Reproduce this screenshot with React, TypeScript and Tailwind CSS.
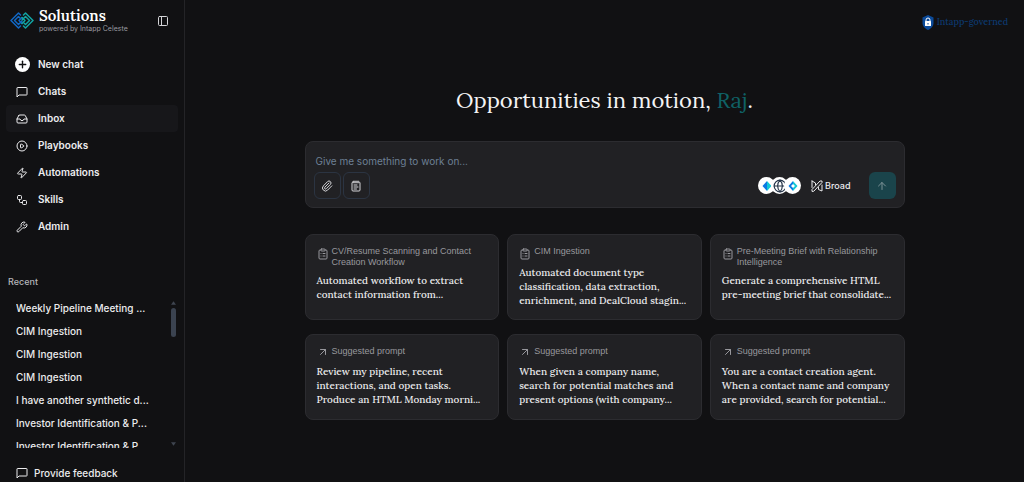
import type { ReactNode } from 'react';
import {
  ArrowUp,
  ArrowUpRight,
  CirclePlay,
  ClipboardList,
  Globe,
  Inbox,
  NotepadText,
  PanelLeft,
  Paperclip,
  Plus,
  Workflow,
  Wrench,
  Zap,
} from 'lucide-react';

const serif = "font-['Lora','Liberation_Serif',serif]";

function Logo() {
  return (
    <svg viewBox="0 0 48 34" className="w-6 h-[17px] shrink-0" fill="none" strokeWidth="3" strokeLinejoin="round" strokeLinecap="round">
      <g stroke="#1268c4">
        <path d="M21 6 17 2 2 17 17 32 21 28" />
        <path d="M20 12 17 9 9 17 17 25 24 18" />
        <path d="M24 11 18 17 24 23" />
      </g>
      <g stroke="#12a5a3">
        <path d="M27 6 31 2 46 17 31 32 27 28" />
        <path d="M24 16 31 9 39 17 31 25 28 22" />
        <path d="M24 11 30 17 24 23" />
      </g>
    </svg>
  );
}

function ChatIcon({ className }: { className?: string }) {
  return (
    <svg viewBox="0 0 24 24" className={className} fill="none" stroke="currentColor" strokeWidth="2" strokeLinejoin="round">
      <path d="M22 4a1 1 0 0 0-1-1H3a1 1 0 0 0-1 1v18l4-4h15a1 1 0 0 0 1-1z" />
    </svg>
  );
}

function BroadIcon() {
  return (
    <svg viewBox="0 0 24 24" className="w-3 h-3" fill="none" stroke="currentColor" strokeWidth="2" strokeLinejoin="round" strokeLinecap="round">
      <path d="M2 2v13M2 2l7 4v4M2 22v-3L18 2h4v3L6 22zM22 10v12l-7-3v-4" />
    </svg>
  );
}

function ShieldIcon() {
  return (
    <svg viewBox="0 0 24 30" className="w-3 h-[15px]">
      <path d="M12 0 23 5v11c0 7-5 11-11 14C6 27 1 23 1 16V5z" fill="#0b4a99" />
      <path d="M8 13v-3a4 4 0 0 1 8 0v3" fill="none" stroke="#fff" strokeWidth="2" />
      <rect x="6" y="12" width="12" height="10" rx="1" fill="#fff" />
      <path d="M12 16v3" stroke="#0b4a99" strokeWidth="2" />
    </svg>
  );
}

function SourceDiamond({ hollow }: { hollow?: boolean }) {
  return (
    <svg viewBox="0 0 20 20" className="w-[10px] h-[10px]">
      <path d="M10 0 1 10 10 20z" fill="#0b78e3" />
      <path d="M10 0 19 10 10 20z" fill="#12c8d6" />
      {hollow && <path d="M10 6 14 10 10 14 6 10z" fill="#fff" />}
    </svg>
  );
}

const navItems = [
  {
    label: 'New chat',
    icon: (
      <span className="flex w-[15px] h-[15px] items-center justify-center rounded-full bg-white text-[#111113]">
        <Plus className="w-[11px] h-[11px]" strokeWidth={3} />
      </span>
    ),
  },
  { label: 'Chats', icon: <ChatIcon className="w-3 h-3" /> },
  { label: 'Inbox', icon: <Inbox className="w-3 h-3" />, active: true },
  { label: 'Playbooks', icon: <CirclePlay className="w-3 h-3" /> },
  { label: 'Automations', icon: <Zap className="w-3 h-3" /> },
  { label: 'Skills', icon: <Workflow className="w-3 h-3" /> },
  { label: 'Admin', icon: <Wrench className="w-3 h-3" /> },
];

const recent = [
  'Weekly Pipeline Meeting ...',
  'CIM Ingestion',
  'CIM Ingestion',
  'CIM Ingestion',
  'I have another synthetic d...',
  'Investor Identification & P...',
  'Investor Identification & P...',
];

const cards = [
  {
    title: 'CV/Resume Scanning and Contact\nCreation Workflow',
    body: 'Automated workflow to extract\ncontact information from...',
  },
  {
    title: 'CIM Ingestion',
    body: 'Automated document type\nclassification, data extraction,\nenrichment, and DealCloud stagin...',
  },
  {
    title: 'Pre-Meeting Brief with Relationship\nIntelligence',
    body: 'Generate a comprehensive HTML\npre-meeting brief that consolidate...',
  },
  {
    title: 'Suggested prompt',
    body: 'Review my pipeline, recent\ninteractions, and open tasks.\nProduce an HTML Monday morni...',
    prompt: true,
  },
  {
    title: 'Suggested prompt',
    body: 'When given a company name,\nsearch for potential matches and\npresent options (with company...',
    prompt: true,
  },
  {
    title: 'Suggested prompt',
    body: 'You are a contact creation agent.\nWhen a contact name and company\nare provided, search for potential...',
    prompt: true,
  },
];

function Sidebar() {
  return (
    <aside className="flex h-screen w-[185px] shrink-0 flex-col border-r border-[#242427]">
      <header className="flex items-center pt-2 pl-[10px] pr-[15px]">
        <Logo />
        <div className="ml-[5px] flex-1">
          <div className={`${serif} text-[15px] leading-4 font-semibold text-white`}>Solutions</div>
          <div className="text-[7px] leading-[9px] text-[#9a9aa0] whitespace-nowrap">powered by Intapp Celeste</div>
        </div>
        <button aria-label="Toggle sidebar" className="text-[#d5d5d8]">
          <PanelLeft className="w-3 h-3" />
        </button>
      </header>

      <nav className="mt-[18px] px-[6px]">
        {navItems.map((item) => (
          <a
            key={item.label}
            href="#"
            className={`flex h-[27px] items-center gap-2 rounded pl-2 text-[10px] font-semibold text-[#ececee] ${item.active ? 'bg-[#17171a]' : ''}`}
          >
            <span className="flex w-4 justify-center">{item.icon}</span>
            {item.label}
          </a>
        ))}
      </nav>

      <h2 className="mt-9 pl-2 text-[9px] leading-3 font-medium text-[#b5b5ba]">Recent</h2>
      <div className="mt-[9px] flex min-h-0 flex-1 pr-[6px]">
        <ul className="min-w-0 flex-1 overflow-hidden pl-4">
          {recent.map((title, i) => (
            <li key={i}>
              <a href="#" className="block h-[23px] truncate text-[10px] leading-[23px] font-medium text-[#ececee]">
                {title}
              </a>
            </li>
          ))}
        </ul>
        <div className="flex w-[10px] flex-col items-center pt-1 text-[#3f4550]">
          <svg viewBox="0 0 6 4" className="w-[5px] h-1" fill="currentColor"><path d="M3 0 6 4H0z" /></svg>
          <div className="mt-[3px] h-[29px] w-[5px] rounded-full bg-[#3b4350]" />
          <svg viewBox="0 0 6 4" className="mt-auto mb-[2px] w-[5px] h-1" fill="currentColor"><path d="M3 4 6 0H0z" /></svg>
        </div>
      </div>
      <a href="#" className="mt-4 flex h-[18px] items-center gap-[6px] pl-4 text-[10px] font-medium text-[#ececee]">
        <ChatIcon className="w-3 h-3" />
        Provide feedback
      </a>
    </aside>
  );
}

function ToolButton({ label, children }: { label: string; children: ReactNode }) {
  return (
    <button aria-label={label} type="button" className="flex w-[27px] h-[27px] items-center justify-center rounded-md border border-[#2b3442] text-[#d5d5d8]">
      {children}
    </button>
  );
}

function Composer() {
  return (
    <form className="rounded-lg border border-[#2c2c30] bg-[#212124] px-2 pt-3 pb-2" onSubmit={(e) => e.preventDefault()}>
      <textarea
        aria-label="Message"
        rows={1}
        placeholder="Give me something to work on..."
        className="block h-[18px] w-full resize-none bg-transparent px-[2px] text-[10px] leading-[14px] text-white outline-none placeholder:text-[#6d8095]"
      />
      <div className="flex items-center gap-[2px]">
        <ToolButton label="Attach file"><Paperclip className="w-3 h-3" /></ToolButton>
        <ToolButton label="Templates"><NotepadText className="w-3 h-3" /></ToolButton>
        <button aria-label="Sources" type="button" className="ml-auto flex">
          <span className="flex w-[17px] h-[17px] items-center justify-center rounded-full bg-white">
            <SourceDiamond />
          </span>
          <span className="-ml-1 flex w-[17px] h-[17px] items-center justify-center rounded-full bg-white text-[#27364a]">
            <Globe className="w-[14px] h-[14px]" />
          </span>
          <span className="-ml-1 flex w-[17px] h-[17px] items-center justify-center rounded-full bg-white">
            <SourceDiamond hollow />
          </span>
        </button>
        <button type="button" className="ml-2 flex items-center gap-[2px] text-[9px] font-medium text-[#ececee]">
          <BroadIcon />
          Broad
        </button>
        <button aria-label="Send" type="submit" className="ml-4 flex w-[27px] h-[27px] items-center justify-center rounded-md bg-[#1a444b] text-[#7b9196]">
          <ArrowUp className="w-3 h-3" />
        </button>
      </div>
    </form>
  );
}

export default function App() {
  return (
    <div className="flex h-screen overflow-hidden bg-[#111113] font-['Inter','Liberation_Sans',sans-serif]">
      <Sidebar />
      <main className="min-w-0 flex-1 px-4">
        <div className={`${serif} flex h-11 items-center justify-end gap-[3px] text-[9px] font-medium text-[#0c3a70]`}>
          <ShieldIcon />
          Intapp-governed
        </div>
        <div className="mx-auto max-w-[600px]">
          <h1 className={`${serif} mt-10 text-center text-[22px] leading-8 text-[#f4f4f5]`}>
            Opportunities in motion, <span className="text-[#0f6165]">Raj</span>.
          </h1>
          <div className="mt-[25px]">
            <Composer />
          </div>
          <div className="mt-[26px] grid grid-cols-3 gap-x-2 gap-y-[14px]">
            {cards.map((card, i) => (
              <button key={i} className="flex min-h-[86px] flex-col rounded-lg border border-[#2c2c30] bg-[#212124] px-[11px] py-[11px] text-left">
                <span className="flex min-h-[13px] gap-[3px] font-['Liberation_Sans',sans-serif] text-[9px] leading-[11px] text-[#98989d]">
                  <span className={`flex w-3 shrink-0 justify-center ${card.prompt ? '' : 'pt-[2px]'}`}>
                    {card.prompt ? <ArrowUpRight className="w-3 h-3" /> : <ClipboardList className="w-3 h-3" />}
                  </span>
                  <span className="whitespace-pre">{card.title}</span>
                </span>
                <span className={`${serif} mt-[6px] whitespace-pre text-[10px] leading-[14px] font-medium text-[#ececee]`}>{card.body}</span>
              </button>
            ))}
          </div>
        </div>
      </main>
    </div>
  );
}
